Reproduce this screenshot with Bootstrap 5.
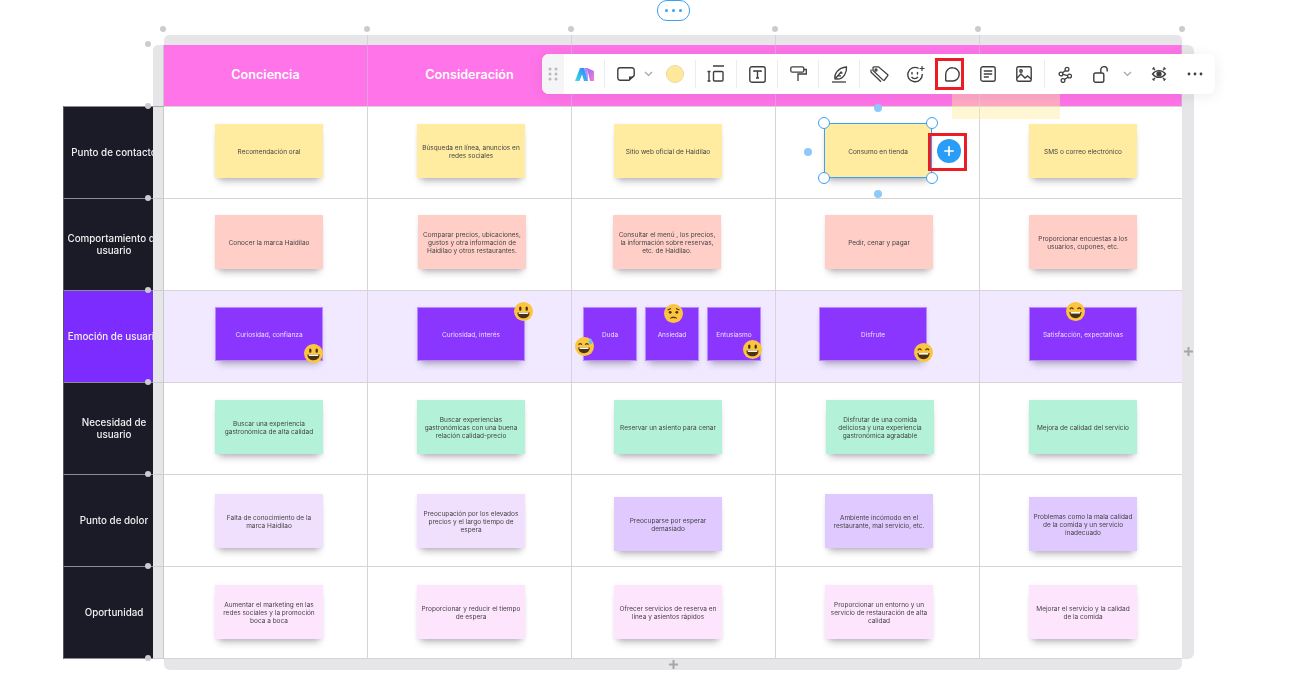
<!DOCTYPE html>
<html lang="es">
<head>
<meta charset="utf-8">
<title>Mapa de experiencia</title>
<link href="https://cdn.jsdelivr.net/npm/bootstrap@5.3.0/dist/css/bootstrap.min.css" rel="stylesheet">
<style>
html,body{height:100%;background:#fff;overflow:hidden}
body{font-family:Inter,"Liberation Sans",sans-serif}
.stage{position:relative;width:1294px;height:699px;padding:35px 0 0 63px}
.board{display:grid;grid-template-columns:90px 11px 204px 204px 204px 204px 202px 12px;grid-template-rows:10px 61px repeat(5,92px) 93px 11px;transform:translateZ(0)}
.bar{background:#e6e6e8}
.bar-top{border-right:1px solid #d3d3d6}
.bar-first{border-top-left-radius:5px}
.bar-last{border-top-right-radius:5px;border-right:0}
.bar-left{border-right:1px solid #c9c9cd;border-top:1px solid #cfcfd3}
.bar-left-head{border-top:0;border-top-left-radius:5px}
.bar-left-first{border-top-color:#a9a9ae}
.bar-left-end{border-bottom:1px solid #cfcfd3}
.bar-right{grid-column:8;grid-row:2/9;border-top-right-radius:6px;border-bottom-right-radius:6px;position:relative}
.bar-bottom{grid-column:3/8;border-radius:0 0 6px 6px;position:relative}
.gap-cell{grid-column:1/3}
.corner{grid-column:1}
.head{background:#ff74e8;color:#fff;font-size:12.6px;font-weight:600;display:flex;align-items:center;justify-content:center;border-right:1px solid #e59fdc}
.side{background:#1b1b27;color:#f2f2f2;font-size:9.8px;font-weight:500;line-height:12px;display:flex;align-items:center;overflow:hidden;border-top:1px solid #8c8c94;border-left:1px solid #55555d;text-align:center}
.side-end{border-bottom:1px solid #8c8c94}
.side-purple{background:#7c2cff}
.side span{flex:0 0 110px;margin-left:-5px}
.cell{border-right:1px solid #d5d5d8;border-top:1px solid #d5d5d8;display:flex;align-items:flex-start}
.cell-last{border-bottom:1px solid #d5d5d8}
.cell-end{border-right:0}
.c1{padding-left:51px}.c2{padding-left:49px}.c3{padding-left:42px}.c4{padding-left:48px}.c5{padding-left:49px}
.r1{padding-top:17px}.r2{padding-top:16px}.r3{padding-top:16px;background:#f1e9ff}.r4{padding-top:17px}.r5{padding-top:19px}.r5b{padding-top:22px}.r6{padding-top:18px}
.tri{padding-left:11px;gap:8px}
.sticky{position:relative;flex:0 0 auto;width:108px;height:54px;display:flex;align-items:center;justify-content:center;text-align:center;padding:2px 3px 0;font-size:6.5px;line-height:8px;color:#444;box-shadow:0 7px 7px -4px rgba(40,40,60,.32),0 1px 4px rgba(40,40,60,.08)}
.square{width:54px;padding:2px 1px 0}
.nudge-r{margin-left:1px}.nudge-l{margin-left:-1px}.nudge-ll{margin-left:-5px}.nudge-rr{margin-left:2px}
.s-yellow{background:#ffeca0}
.s-rose{background:#ffcfc7}
.s-violet{background:#8b36ff;color:#ecdfff;border:1px solid #b78aff}
.s-green{background:#b3f2d8}
.s-lilac{background:#f0e0fd}
.s-lilac2{background:#e0c9ff}
.s-pink{background:#fde6fd}
.emo{position:absolute;width:19px;height:19px}
.e-a{left:88px;top:36px}.e-b{left:96px;top:-6px}.e-c{left:-9px;top:29px}.e-d{left:18px;top:-4px}.e-e{left:35px;top:32px}.e-f{left:94px;top:35px}.e-g{left:36px;top:-6px}
.dot-g{position:absolute;width:6px;height:6px;border-radius:50%;background:#ccccd0;transform:translate(-50%,-50%)}
.pill{position:absolute;left:657px;top:0;width:33px;height:21px;border:1.5px solid #3aa0f5;border-radius:10px;background:#fff;display:flex;align-items:center;justify-content:center;gap:4px}
.pill i{width:3px;height:3px;border-radius:50%;background:#3aa0f5;display:block}
.ghost{position:absolute;left:952px;top:60px;width:108px;height:59px;background:rgba(255,236,160,.45)}
.toolbar{position:absolute;left:542px;top:54px;width:673px;height:40px;background:#fff;border-radius:7px;box-shadow:0 2px 14px rgba(30,30,50,.08);display:flex;align-items:center}
.grip{flex:0 0 22px;height:40px;background:#f5f5f7;border-radius:7px 0 0 7px;display:flex;align-items:center;justify-content:center}
.tool{flex:0 0 auto;display:flex;align-items:center;justify-content:center;height:40px;color:#3f3f42}
.w14{width:14px}.w20{width:20px}.w28{width:28px}.w30{width:30px;margin-left:6px}.w32{width:32px}.w36{width:36px}.w38{width:38px}.w40{width:40px}.w44{width:44px}
.vsep{flex:0 0 1px;height:28px;background:#ececee}
.vsep-s{margin-left:2px}
.red-box{position:absolute;border:3px solid #ec1c24;background:transparent}
.red-a{left:935px;top:58px;width:29px;height:32px}
.red-b{left:928px;top:133px;width:39px;height:38px}
.sel{position:absolute;left:824px;top:123px;width:108px;height:55px;border:1px solid #3aa0f5}
.hnd{position:absolute;width:12px;height:12px;border-radius:50%;background:#fff;border:1.5px solid #3aa0f5;transform:translate(-50%,-50%)}
.hlt{left:-1px;top:-1px}.hrt{left:calc(100% + 1px);top:-1px}.hlb{left:-1px;top:calc(100% + 1px)}.hrb{left:calc(100% + 1px);top:calc(100% + 1px)}
.dot-b{position:absolute;width:8px;height:8px;border-radius:50%;background:#90c8fb;transform:translate(-50%,-50%)}
.plus-btn{position:absolute;left:937px;top:139px;width:24px;height:24px;border-radius:50%;background:#2a9df8;display:flex;align-items:center;justify-content:center}
.plus-g{position:absolute;color:#a5a5aa;width:9px;height:9px}
.plus-r{left:1184px;top:347px}
.plus-b{left:669px;top:660px}
</style>
</head>
<body>
<svg width="0" height="0" class="position-absolute">
<defs>
<linearGradient id="lg1" x1="0" y1="1" x2="1" y2="0"><stop offset="0" stop-color="#3ce0d8"/><stop offset="1" stop-color="#2a7bff"/></linearGradient>
<linearGradient id="lg2" x1="0" y1="0" x2="1" y2="1"><stop offset="0" stop-color="#8a6bff"/><stop offset="1" stop-color="#ff7fd0"/></linearGradient>
<symbol id="em-smile" viewBox="0 0 20 20"><circle cx="10" cy="10" r="10" fill="#fbc53f"/><ellipse cx="6.600" cy="7" rx="1.300" ry="2.300" fill="#4a3310"/><ellipse cx="13.400" cy="7" rx="1.300" ry="2.300" fill="#4a3310"/><path d="M3.600 11h12.800c0 3.800-2.900 6.200-6.400 6.200S3.600 14.800 3.600 11z" fill="#4a3310"/><path d="M5 11h10v1.600H5z" fill="#fff"/></symbol>
<symbol id="em-laugh" viewBox="0 0 20 20"><circle cx="10" cy="10" r="10" fill="#fbc53f"/><path d="M4.200 7.600c.6-1.800 3-1.800 3.600 0M12.200 7.600c.6-1.800 3-1.800 3.600 0" fill="none" stroke="#4a3310" stroke-width="1.200"/><path d="M3.600 10.500h12.800c0 3.900-2.900 6.500-6.400 6.500s-6.400-2.600-6.400-6.500z" fill="#4a3310"/><path d="M5 10.500h10v1.700H5z" fill="#fff"/></symbol>
<symbol id="em-sweat" viewBox="0 0 20 20"><circle cx="10" cy="10" r="10" fill="#fbc53f"/><path d="M3.800 8.200c.6-1.600 2.800-1.600 3.400 0M10.800 8.200c.6-1.600 2.800-1.600 3.400 0" fill="none" stroke="#4a3310" stroke-width="1.200"/><path d="M3.400 11h12.200c0 3.600-2.700 6-6.100 6s-6.100-2.400-6.100-6z" fill="#4a3310"/><path d="M4.800 11h9.400v1.600H4.800z" fill="#fff"/><path d="M16.500 1c1 1.800 2 3 2 4.300a2.100 2.100 0 0 1-4.200 0c0-1.300 1.200-2.500 2.200-4.300z" fill="#72b8e8"/></symbol>
<symbol id="em-worry" viewBox="0 0 20 20"><circle cx="10" cy="10" r="10" fill="#fbc53f"/><path d="M3.800 6.200 7.400 4.800M16.200 6.200 12.600 4.800" stroke="#4a3310" stroke-width="1.100" fill="none"/><circle cx="6.500" cy="8.800" r="1.500" fill="#4a3310"/><circle cx="13.500" cy="8.800" r="1.500" fill="#4a3310"/><path d="M6.200 15.500c.6-2.700 7-2.700 7.600 0-1.900-.9-5.700-.9-7.600 0z" fill="#4a3310"/></symbol>
</defs>
</svg>
<div class="stage">
<div class="board">
  <div class="corner"></div>
  <div></div>
  <div class="bar bar-top bar-first"></div><div class="bar bar-top"></div><div class="bar bar-top"></div><div class="bar bar-top"></div><div class="bar bar-top bar-last"></div>
  <div></div>

  <div class="corner"></div>
  <div class="bar bar-left bar-left-head"></div>
  <div class="head">Conciencia</div><div class="head">Consideración</div><div class="head"></div><div class="head"></div><div class="head"></div>
  <div class="bar bar-right"></div>

  <div class="side"><span>Punto de contacto</span></div>
  <div class="bar bar-left bar-left-first"></div>
  <div class="cell c1 r1"><div class="sticky s-yellow">Recomendación oral</div></div>
  <div class="cell c2 r1"><div class="sticky s-yellow">Búsqueda en línea, anuncios en redes sociales</div></div>
  <div class="cell c3 r1"><div class="sticky s-yellow">Sitio web oficial de Haidilao</div></div>
  <div class="cell c4 r1"><div class="sticky s-yellow">Consumo en tienda</div></div>
  <div class="cell c5 r1 cell-end"><div class="sticky s-yellow">SMS o correo electrónico</div></div>

  <div class="side"><span>Comportamiento de usuario</span></div>
  <div class="bar bar-left"></div>
  <div class="cell c1 r2"><div class="sticky s-rose">Conocer la marca Haidilao</div></div>
  <div class="cell c2 r2"><div class="sticky s-rose nudge-r">Comparar precios, ubicaciones, gustos y otra información de Haidilao y otros restaurantes.</div></div>
  <div class="cell c3 r2"><div class="sticky s-rose nudge-l">Consultar el menú , los precios, la información sobre reservas, etc. de Haidilao.</div></div>
  <div class="cell c4 r2"><div class="sticky s-rose nudge-r">Pedir, cenar y pagar</div></div>
  <div class="cell c5 r2 cell-end"><div class="sticky s-rose">Proporcionar encuestas a los usuarios, cupones, etc.</div></div>

  <div class="side side-purple"><span>Emoción de usuario</span></div>
  <div class="bar bar-left"></div>
  <div class="cell c1 r3"><div class="sticky s-violet">Curiosidad, confianza<svg class="emo e-a"><use href="#em-smile"/></svg></div></div>
  <div class="cell c2 r3"><div class="sticky s-violet">Curiosidad, interés<svg class="emo e-b"><use href="#em-smile"/></svg></div></div>
  <div class="cell r3 tri">
    <div class="sticky s-violet square">Duda<svg class="emo e-c"><use href="#em-sweat"/></svg></div>
    <div class="sticky s-violet square">Ansiedad<svg class="emo e-d"><use href="#em-worry"/></svg></div>
    <div class="sticky s-violet square">Entusiasmo<svg class="emo e-e"><use href="#em-smile"/></svg></div>
  </div>
  <div class="cell c4 r3"><div class="sticky s-violet nudge-ll">Disfrute<svg class="emo e-f"><use href="#em-laugh"/></svg></div></div>
  <div class="cell c5 r3 cell-end"><div class="sticky s-violet">Satisfacción, expectativas<svg class="emo e-g"><use href="#em-laugh"/></svg></div></div>

  <div class="side"><span>Necesidad de<br>usuario</span></div>
  <div class="bar bar-left"></div>
  <div class="cell c1 r4"><div class="sticky s-green">Buscar una experiencia gastronómica de alta calidad</div></div>
  <div class="cell c2 r4"><div class="sticky s-green">Buscar experiencias gastronómicas con una buena relación calidad-precio</div></div>
  <div class="cell c3 r4"><div class="sticky s-green">Reservar un asiento para cenar</div></div>
  <div class="cell c4 r4"><div class="sticky s-green nudge-rr">Disfrutar de una comida deliciosa y una experiencia gastronómica agradable</div></div>
  <div class="cell c5 r4 cell-end"><div class="sticky s-green">Mejora de calidad del servicio</div></div>

  <div class="side"><span>Punto de dolor</span></div>
  <div class="bar bar-left"></div>
  <div class="cell c1 r5"><div class="sticky s-lilac">Falta de conocimiento de la<br>marca Haidilao</div></div>
  <div class="cell c2 r5"><div class="sticky s-lilac">Preocupación por los elevados precios y el largo tiempo de espera</div></div>
  <div class="cell c3 r5b"><div class="sticky s-lilac2">Preocuparse por esperar demasiado</div></div>
  <div class="cell c4 r5"><div class="sticky s-lilac2 nudge-r">Ambiente incómodo en el restaurante, mal servicio, etc.</div></div>
  <div class="cell c5 r5b cell-end"><div class="sticky s-lilac2">Problemas como la mala calidad de la comida y un servicio inadecuado</div></div>

  <div class="side side-end"><span>Oportunidad</span></div>
  <div class="bar bar-left bar-left-end"></div>
  <div class="cell cell-last c1 r6"><div class="sticky s-pink">Aumentar el marketing en las redes sociales y la promoción boca a boca</div></div>
  <div class="cell cell-last c2 r6"><div class="sticky s-pink">Proporcionar y reducir el tiempo de espera</div></div>
  <div class="cell cell-last c3 r6"><div class="sticky s-pink">Ofrecer servicios de reserva en línea y asientos rápidos</div></div>
  <div class="cell cell-last c4 r6"><div class="sticky s-pink nudge-r">Proporcionar un entorno y un servicio de restauración de alta calidad</div></div>
  <div class="cell cell-last c5 r6 cell-end"><div class="sticky s-pink">Mejorar el servicio y la calidad de la comida</div></div>

  <div class="gap-cell"></div>
  <div class="bar bar-bottom"></div>
</div>

<!-- canvas handles -->
<b class="dot-g" style="left:163px;top:29px"></b><b class="dot-g" style="left:367px;top:29px"></b><b class="dot-g" style="left:571px;top:29px"></b><b class="dot-g" style="left:775px;top:29px"></b><b class="dot-g" style="left:978px;top:29px"></b><b class="dot-g" style="left:1182px;top:29px"></b>
<b class="dot-g" style="left:148px;top:44px"></b><b class="dot-g" style="left:148px;top:106px"></b><b class="dot-g" style="left:148px;top:198px"></b><b class="dot-g" style="left:148px;top:290px"></b><b class="dot-g" style="left:148px;top:382px"></b><b class="dot-g" style="left:148px;top:474px"></b><b class="dot-g" style="left:148px;top:566px"></b><b class="dot-g" style="left:148px;top:658px"></b>
<div class="pill"><i></i><i></i><i></i></div>
<svg class="plus-g plus-r" viewBox="0 0 9 9"><path d="M4.500 0v9M0 4.500h9" stroke="currentColor" stroke-width="2"/></svg>
<svg class="plus-g plus-b" viewBox="0 0 9 9"><path d="M4.500 0v9M0 4.500h9" stroke="currentColor" stroke-width="2"/></svg>

<div class="ghost"></div>

<!-- selection -->
<div class="sel"><b class="hnd hlt"></b><b class="hnd hrt"></b><b class="hnd hlb"></b><b class="hnd hrb"></b></div>
<b class="dot-b" style="left:878px;top:108px"></b><b class="dot-b" style="left:878px;top:194px"></b><b class="dot-b" style="left:808px;top:152px"></b>
<div class="plus-btn"><svg width="10" height="10" viewBox="0 0 12 12"><path d="M6 1v10M1 6h10" stroke="#fff" stroke-width="2" stroke-linecap="round"/></svg></div>

<!-- toolbar -->
<div class="toolbar">
  <div class="grip"><svg width="10" height="14" viewBox="0 0 10 14" fill="#b9b9bf"><circle cx="2" cy="2" r="1.500"/><circle cx="8" cy="2" r="1.500"/><circle cx="2" cy="7" r="1.500"/><circle cx="8" cy="7" r="1.500"/><circle cx="2" cy="12" r="1.500"/><circle cx="8" cy="12" r="1.500"/></svg></div>
  <div class="tool w40"><svg width="19" height="13" viewBox="0 0 19 13"><path d="M0 13 5 0h4l4 13H9L7 6.500 4.500 13z" fill="url(#lg1)"/><path d="M9 0h3.500L13 13z" fill="#a470ff" opacity=".85"/><path d="M12 0 19 3v10h-4z" fill="url(#lg2)"/></svg></div>
  <div class="vsep"></div>
  <div class="tool w30"><svg width="18" height="14" viewBox="0 0 18 14" fill="none"><path d="M3 .8h12A2.200 2.200 0 0 1 17.200 3v5.500L12 13.200H3A2.200 2.200 0 0 1 .8 11V3A2.200 2.200 0 0 1 3 .8z" stroke="currentColor" stroke-width="1.400"/><path d="M12 13.500V9.500h5.500z" fill="currentColor"/></svg></div>
  <div class="tool w14"><svg width="9" height="6" viewBox="0 0 9 6" fill="none"><path d="M1 1l3.500 3.500L8 1" stroke="#a5a5aa" stroke-width="1.200"/></svg></div>
  <div class="tool w40"><svg width="18" height="18" viewBox="0 0 18 18"><circle cx="9" cy="9" r="8.600" fill="#ffe89c" stroke="#e4d596" stroke-width=".8"/></svg></div>
  <div class="vsep"></div>
  <div class="tool w40"><svg width="18" height="18" viewBox="0 0 18 18" fill="none" stroke="currentColor" stroke-width="1.400"><path d="M6 1h11M2 6.500v9.500M.5 6.500h3M.5 16h3"/><rect x="6.500" y="6.500" width="9.500" height="9.500" rx="1"/></svg></div>
  <div class="vsep"></div>
  <div class="tool w40"><svg width="17" height="17" viewBox="0 0 17 17" fill="none" stroke="currentColor" stroke-width="1.400"><rect x=".8" y=".8" width="15.400" height="15.400" rx="2"/><path d="M5 6V5h7v1M8.500 5v7M7 12h3"/></svg></div>
  <div class="vsep"></div>
  <div class="tool w40"><svg width="17" height="16" viewBox="0 0 17 16" fill="none" stroke="currentColor" stroke-width="1.300"><rect x=".8" y=".8" width="13" height="5.400" rx="1.500"/><path d="M13.800 3.500h2.500v4.500H8v7"/></svg></div>
  <div class="vsep"></div>
  <div class="tool w40"><svg width="17" height="17" viewBox="0 0 17 17" fill="none" stroke="currentColor" stroke-width="1.300"><path d="M1 16h14"/><path d="M4 12.800C3 8.500 6.500 1.800 15.500 1c.5 5.500-3 12-9 12z"/><path d="M4 13 10.500 5.500M6.500 9.800h3.500M8.500 7.200l3-.2"/></svg></div>
  <div class="vsep"></div>
  <div class="tool w38"><svg width="19" height="17" viewBox="0 0 19 17" fill="none" stroke="currentColor" stroke-width="1.300"><path d="M3 4.500V1.800a1 1 0 0 1 1-1h4.500l9 7.700a1 1 0 0 1 .1 1.400L14.500 14a1 1 0 0 1-1.400.1z"/><path d="M1 3.500v2.300a1 1 0 0 0 .4.800L11 15.800"/><circle cx="6" cy="4" r="1"/></svg></div>
  <div class="tool w36"><svg width="18" height="17" viewBox="0 0 18 17" fill="none" stroke="currentColor" stroke-width="1.400"><path d="M11.500 2.300A7.200 7.200 0 1 0 15.200 8"/><path d="M5 6.500v1.500M10.500 6.500v1.500" stroke-linecap="round"/><path d="M4.500 10.800c1.500 2.400 5 2.400 6.500 0"/><path d="M15 0v5M12.500 2.500h5" stroke-width="1.200"/></svg></div>
  <div class="tool w36"><svg width="15" height="15" viewBox="0 0 15 15" fill="none"><path d="M7.800.8a6.400 6.400 0 0 1 6.400 6.400c0 3.600-2.800 6.800-6.400 6.800H1.500c-.5 0-.8-.3-.8-.8V7.200A6.400 6.400 0 0 1 7.800.8z" stroke="currentColor" stroke-width="1.400"/></svg></div>
  <div class="tool w36"><svg width="16" height="16" viewBox="0 0 16 16" fill="none" stroke="currentColor" stroke-width="1.400"><rect x=".8" y=".8" width="14.400" height="14.400" rx="2"/><path d="M3.800 5h8.400M3.800 8h8.400M3.800 11h5"/></svg></div>
  <div class="tool w36"><svg width="16" height="16" viewBox="0 0 16 16" fill="none" stroke="currentColor" stroke-width="1.400"><rect x=".8" y=".8" width="14.400" height="14.400" rx="1.500"/><path d="M1 12l4-4 4 4 2.500-2 3.700 3"/><circle cx="5" cy="5" r="1.200"/></svg></div>
  <div class="vsep vsep-s"></div>
  <div class="tool w40"><svg width="15" height="17" viewBox="0 0 15 17" fill="none" stroke="currentColor" stroke-width="1.300"><circle cx="9" cy="3.200" r="1.900"/><circle cx="3" cy="8" r="1.900"/><circle cx="11.500" cy="10" r="1.900"/><circle cx="5" cy="14.500" r="1.900"/><path d="M7.500 4.400 4.500 6.800M4.900 8.400l4.700 1.200M10 11.300l-3.500 2.100"/></svg></div>
  <div class="tool w32"><svg width="16" height="17" viewBox="0 0 16 17" fill="none" stroke="currentColor" stroke-width="1.400"><rect x=".8" y="7" width="10" height="9.200" rx="1.800"/><path d="M7.800 7V3.800a3.200 3.200 0 0 1 6.400 0v1.700"/></svg></div>
  <div class="tool w20"><svg width="9" height="6" viewBox="0 0 9 6" fill="none"><path d="M1 1l3.500 3.500L8 1" stroke="#a5a5aa" stroke-width="1.200"/></svg></div>
  <div class="tool w44"><svg width="18" height="18" viewBox="0 0 18 18" fill="none" stroke="currentColor" stroke-width="1.300"><path d="M2.500 9c3.500-4.500 9.500-4.500 13 0-3.500 4.500-9.500 4.500-13 0z"/><circle cx="9" cy="9" r="2" fill="currentColor"/><path d="M3 3l2 2M3 3h1.500M3 3v1.500M15 3l-2 2M15 3h-1.500M15 3v1.500M3 15l2-2M3 15h1.500M3 15v-1.500M15 15l-2-2M15 15h-1.500M15 15v-1.500"/></svg></div>
  <div class="tool w28"><svg width="16" height="4" viewBox="0 0 16 4" fill="currentColor"><circle cx="2" cy="2" r="1.400"/><circle cx="8" cy="2" r="1.400"/><circle cx="14" cy="2" r="1.400"/></svg></div>
</div>
<div class="red-box red-a"></div>
<div class="red-box red-b"></div>
</div>
<script src="https://cdn.jsdelivr.net/npm/bootstrap@5.3.0/dist/js/bootstrap.bundle.min.js"></script>
</body>
</html>
